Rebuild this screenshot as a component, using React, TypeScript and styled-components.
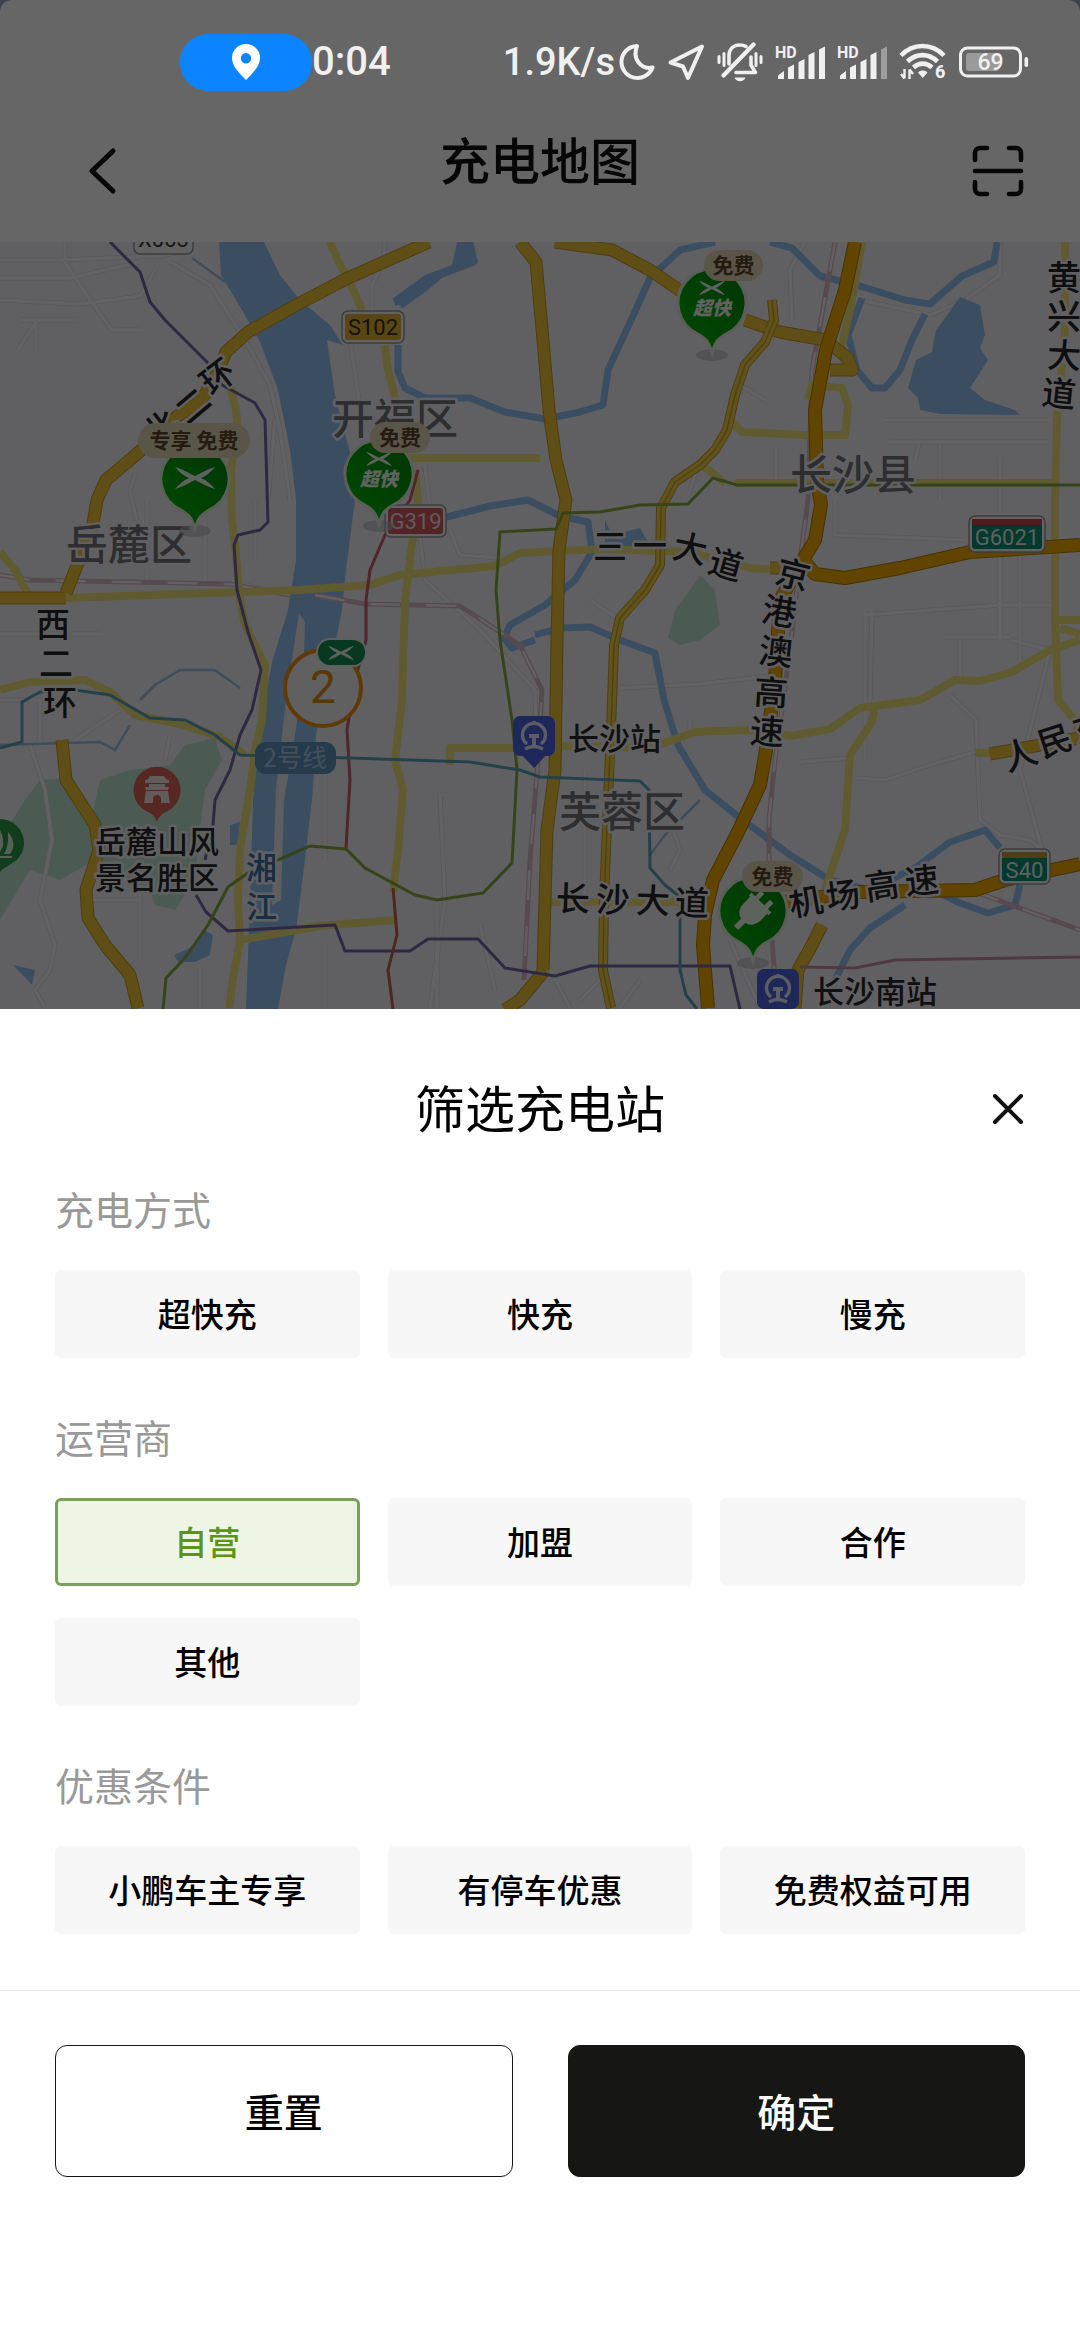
import React, { useState } from "react";
import styled, { createGlobalStyle } from "styled-components";

const cjk = `"Noto Sans CJK SC", "Noto Sans", sans-serif`;
const latin = `Roboto, "Noto Sans CJK SC", sans-serif`;

const GlobalStyle = createGlobalStyle`
  *, *::before, *::after { box-sizing: border-box; }
  body { margin: 0; background: #fff; font-family: ${cjk}; }
  button { font: inherit; margin: 0; cursor: pointer; }
`;

/* ---------- layout ---------- */

const Page = styled.div`
  min-height: 100vh;
  display: flex;
  flex-direction: column;
  background: #fff;
`;

const Scene = styled.div`
  position: relative;
  background: #8aa6c4;
`;

const Scrim = styled.div`
  position: absolute;
  inset: 0;
  background: rgba(0, 0, 0, 0.6);
`;

const Header = styled.header`
  background: #fff;
  border-radius: 12px 12px 0 0;
`;

const StatusBar = styled.div`
  position: relative;
  z-index: 1;
  display: flex;
  align-items: center;
  height: 100px;
  padding: 24px 51px 0 180px;
  color: #f0f0f0;
  font-family: ${latin};
  font-size: 38px;
  font-weight: 500;
  line-height: 48px;
`;

const LocationPill = styled.div`
  display: flex;
  align-items: center;
  justify-content: center;
  width: 132px;
  height: 57px;
  border-radius: 28px;
  background: #0d84ff;
`;

const Clock = styled.span`
  font-size: 40px;
`;

const NetSpeed = styled.span`
  margin-left: auto;
`;

const StatusIcons = styled.div`
  display: flex;
  align-items: center;
  gap: 12px;
  padding-left: 4px;

  svg { display: block; }
`;

const NavBar = styled.div`
  display: grid;
  grid-template-columns: 1fr auto 1fr;
  align-items: center;
  height: 142px;
  padding: 0 56px;
`;

const NavTitle = styled.h1`
  margin: 0;
  padding-bottom: 26px;
  font-size: 50px;
  line-height: 72px;
  font-weight: 500;
  color: #111;
`;

const IconButton = styled.button<{ $place: "start" | "end" }>`
  display: flex;
  align-items: center;
  justify-content: center;
  justify-self: ${(p) => p.$place};
  padding: 0 0 0 ${(p) => (p.$place === "start" ? "24px" : "0")};
  border: 0;
  background: none;
  color: #111;
`;

const MapCanvas = styled.svg`
  display: block;
  width: 100%;
  height: auto;
  background: #f1f1f5;
  font-family: ${cjk};
`;

const Sheet = styled.main`
  flex: 1;
  background: #fff;
`;

const SheetHeader = styled.div`
  display: grid;
  grid-template-columns: 1fr auto 1fr;
  align-items: center;
  padding: 61px 55px 38px;
`;

const SheetTitle = styled.h2`
  grid-column: 2;
  margin: 0;
  padding-bottom: 6px;
  font-size: 50px;
  line-height: 72px;
  font-weight: 400;
  color: #000;
`;

const Filters = styled.div`
  display: flex;
  flex-direction: column;
  gap: 56px;
  padding: 0 55px 56px;
`;

const Group = styled.section`
  display: flex;
  flex-direction: column;
  gap: 40px;
`;

const GroupTitle = styled.h3`
  margin: 0;
  font-size: 39px;
  line-height: 44px;
  font-weight: 400;
  color: #999;
`;

const ChipGrid = styled.div`
  display: grid;
  grid-template-columns: repeat(3, 1fr);
  gap: 32px 28px;
`;

const Chip = styled.button<{ $on: boolean }>`
  height: 88px;
  padding: 0 0 2px;
  border: 3px solid ${(p) => (p.$on ? "#7aa05a" : "#f7f7f7")};
  border-radius: 6px;
  background: ${(p) => (p.$on ? "#eef5e5" : "#f7f7f7")};
  color: ${(p) => (p.$on ? "#5c9418" : "#000")};
  font-size: 33px;
  line-height: 48px;
  font-weight: 500;
`;

const Actions = styled.div`
  display: grid;
  grid-template-columns: 1fr 1fr;
  gap: 55px;
  padding: 54px 55px 64px;
  border-top: 1px solid #ebebeb;
`;

const ActionButton = styled.button<{ $primary?: boolean }>`
  height: 132px;
  padding: 0 0 2px;
  border: 1px solid #161614;
  border-radius: 12px;
  background: ${(p) => (p.$primary ? "#161614" : "#fff")};
  color: ${(p) => (p.$primary ? "#fff" : "#000")};
  font-size: 39px;
  line-height: 56px;
  font-weight: 500;
`;

/* ---------- status icons ---------- */

const PinIcon = () => (
  <svg width="28" height="36" viewBox="0 0 28 36" aria-hidden="true">
    <path fillRule="evenodd" fill="#fff" d="M14 0a14 14 0 0 1 14 14c0 8-7 15-14 22C7 29 0 22 0 14A14 14 0 0 1 14 0Zm0 9a5.200 5.200 0 1 0 0 10.400A5.200 5.200 0 0 0 14 9Z" />
  </svg>
);

const MoonIcon = () => (
  <svg width="36" height="38" viewBox="0 0 36 38" aria-hidden="true">
    <path d="M18 3A16 16 0 1 0 33.500 24.500C22 27 13 16 18 3Z" fill="none" stroke="#f0f0f0" strokeWidth="4" strokeLinejoin="round" />
  </svg>
);

const ArrowIcon = () => (
  <svg width="38" height="38" viewBox="0 0 38 38" aria-hidden="true">
    <path d="M35 3.500 3.500 19.500 16 23.500 21 35Z" fill="none" stroke="#f0f0f0" strokeWidth="4" strokeLinejoin="round" />
  </svg>
);

const MutedBellIcon = () => (
  <svg width="46" height="40" viewBox="0 0 46 40" aria-hidden="true" fill="none" stroke="#f0f0f0" strokeWidth="3.600" strokeLinecap="round">
    <path d="M12 22V14C12 7 16.500 3 23 3c2.500 0 4.500.6 6 1.600" />
    <path d="M34 15v8l4.500 7.500H19" strokeLinejoin="round" />
    <path d="M6.500 33.500 36.500 2.500" strokeWidth="4.200" />
    <path d="M2 14.500v6M7 11.500v12M39 11.500v12M44 14.500v6" strokeWidth="3" />
    <path d="M17.500 35.500h11c-1 2.500-3 3.800-5.500 3.800s-4.500-1.300-5.500-3.800Z" fill="#f0f0f0" stroke="none" />
  </svg>
);

const SignalIcon = ({ weak }: { weak?: boolean }) => (
  <svg width="50" height="36" viewBox="0 -2 50 36" aria-hidden="true" fill="#f0f0f0" fontFamily="Roboto, sans-serif">
    <text x="0" y="12" fontSize="16" fontWeight="700">HD</text>
    <path d="M3 33v-3.500L9 25v8ZM13 33V21.500l6-3V33ZM23.500 33V16l6-3v20ZM33.500 33V9l6-3v27Z" />
    <path d="M44 33V3.500l6-3V33Z" opacity={weak ? 0.4 : 1} />
  </svg>
);

const WifiIcon = () => (
  <svg width="48" height="40" viewBox="0 0 48 40" aria-hidden="true" fill="none" stroke="#f0f0f0" strokeWidth="4.600" fontFamily="Roboto, sans-serif">
    <path d="M2 13.500C14 .8 33 .8 45 13.500" />
    <path d="M8.500 19.500c9-8.500 21-8.500 30 0" />
    <path d="M14.500 25.500c5.500-5.200 13-5.200 18.500 0" />
    <path d="M19 30.500c3-2.600 6.500-2.600 9.500 0L23.700 36Z" fill="#f0f0f0" stroke="none" />
    <path d="M5.500 27v9.500M2 32l3.500 4.500M10.500 37v-9.500M14 32l-3.500-4.500" strokeWidth="2.400" />
    <text x="36" y="36" fontSize="18" fontWeight="800" fill="#f0f0f0" stroke="none">6</text>
  </svg>
);

const BatteryIcon = () => (
  <svg width="70" height="32" viewBox="0 0 70 32" aria-hidden="true" fontFamily="Roboto, sans-serif">
    <rect x="1.500" y="2" width="60" height="28" rx="7" fill="none" stroke="#f0f0f0" strokeWidth="3" />
    <rect x="7" y="7" width="33" height="18" rx="3" fill="#9a9a9a" />
    <rect x="65.500" y="11" width="3.600" height="10" rx="1.800" fill="#f0f0f0" />
    <text x="31.500" y="24" fontSize="23" fontWeight="500" fill="#f0f0f0" textAnchor="middle">69</text>
  </svg>
);

/* ---------- map drawing ---------- */

const Wing = ({ x, y, s = 1, fill = "#fff" }: { x: number; y: number; s?: number; fill?: string }) => (
  <path
    transform={`translate(${x} ${y}) scale(${s})`}
    fill={fill}
    d="M-20-11C-12-9-5-4 0-2 5-4 12-9 20-11 16-6 11-2 6 0c5 2 10 6 14 11C12 9 5 4 0 2-5 4-12 9-20 11c4-5 9-9 14-11C-11-2-16-6-20-11Z"
  />
);

const StationPin = ({ x, y, children }: { x: number; y: number; children: React.ReactNode }) => (
  <g transform={`translate(${x} ${y})`}>
    <ellipse cx="0" cy="52" rx="16" ry="6" fill="#b4b4ba" opacity=".6" />
    <path d="M0 50C-3 40-5 36-14 31A34 34 0 1 1 14 31C5 36 3 40 0 50Z" fill="url(#pinGreen)" stroke="#dfeedd" strokeWidth="3" />
    {children}
  </g>
);

const FastPinArt = () => (
  <>
    <Wing x={0} y={-15} s={0.650} fill="#e8f4e8" />
    <text y="12" fontSize="19" fontWeight="900" fontStyle="italic" textAnchor="middle" fill="#eef6ee">超快</text>
  </>
);

const Badge = ({ x, y, w, h = 31, children }: { x: number; y: number; w: number; h?: number; children: string }) => (
  <g>
    <rect x={x} y={y} width={w} height={h} rx={h / 2} fill="#e2d4b6" />
    <text x={x + w / 2} y={y + h / 2 + 7} fontSize="21" fontWeight="700" textAnchor="middle" fill="#5a442c">{children}</text>
  </g>
);

type Glyph = [string, number, number, number];
const roadGlyphs: Glyph[] = [
  ["环", 218, 377, -38], ["二", 193, 406, -40], ["北", 161, 428, -38],
  ["三", 610, 547, 0], ["一", 650, 546, 0], ["大", 690, 549, 12], ["道", 726, 565, 16],
  ["京", 793, 575, 14], ["港", 779, 612, 10], ["澳", 776, 652, 6], ["高", 771, 693, 4], ["速", 767, 732, 4],
  ["黄", 1064, 278, 0], ["兴", 1064, 317, 0], ["大", 1064, 356, 3], ["道", 1059, 394, 6],
  ["西", 53, 625, 0], ["二", 56, 664, 0], ["环", 60, 703, 0],
  ["长", 573, 899, 2], ["沙", 613, 900, 2], ["大", 653, 901, 2], ["道", 692, 903, 2],
  ["机", 806, 902, -10], ["场", 843, 896, -8], ["高", 882, 886, -8], ["速", 922, 881, -6],
  ["人", 1020, 755, -18], ["民", 1055, 741, -18], ["东", 1090, 728, -18],
];

const Halo = styled.text`
  paint-order: stroke;
  stroke: #f1f1f5;
  stroke-width: 5px;
  stroke-linejoin: round;
`;

const RoadLabel = styled(Halo)`
  font-size: 34px;
  font-weight: 500;
  fill: #26262a;
  text-anchor: middle;
`;

const District = styled(Halo)`
  font-size: 42px;
  font-weight: 500;
  fill: #74747a;
  text-anchor: middle;
`;

const Place = styled(Halo)<{ $water?: boolean }>`
  font-size: 31px;
  font-weight: 500;
  fill: ${(p) => (p.$water ? "#3d6ea6" : "#28282c")};
`;

const Shield = ({ x, y, w, h, fill, cap, color, children }: { x: number; y: number; w: number; h: number; fill: string; cap?: string; color: string; children: string }) => (
  <g>
    <rect x={x} y={y} width={w} height={h} rx="6" fill="#f4f4f6" stroke="#96969c" strokeWidth="1.500" />
    <rect x={x + 3} y={y + 3} width={w - 6} height={h - 6} rx="3" fill={fill} />
    {cap && <rect x={x + 3} y={y + 3} width={w - 6} height="6" fill={cap} />}
    <text x={x + w / 2} y={y + h / 2 + (cap ? 11 : 8)} fontSize="22" fontFamily={latin} textAnchor="middle" fill={color}>{children}</text>
  </g>
);

const RailSign = ({ x, y }: { x: number; y: number }) => (
  <g transform={`translate(${x} ${y})`}>
    <path d="M-13 18 0 32 13 18Z" fill="#4a62e0" />
    <rect x="-21" y="-20" width="42" height="40" rx="7" fill="#4a62e0" />
    <g fill="none" stroke="#e6e8fa" strokeWidth="3.400">
      <path d="M-7 8A11.500 11.500 0 1 1 7 8" />
      <path d="M-5 0H5M0 0v10" strokeWidth="4" />
      <path d="M-9 13Q0 8 9 13" />
      <path d="M0-15v4" />
    </g>
  </g>
);

const streets = [
  "M0 260H60L160 256 190 250", "M0 278H70L140 262", "M0 300 80 304 140 296 155 270", "M65 242V262L90 300 112 330H140",
  "M20 320H75M37 320 18 350M36 320V350", "M170 262 210 285 245 340 270 385 280 430 290 500", "M385 242 383 262 372 285V310",
  "M350 340 362 420M275 420 268 500M255 500V560", "M245 585 290 595", "M147 500V580M205 520V580", "M135 475 130 490 145 560",
  "M425 465 430 510 418 520 425 580 480 630 535 690 538 780", "M450 530 460 555 500 558", "M805 242 790 270 792 320",
  "M860 300 930 315 965 300 1000 275 1000 242", "M885 420H1050M890 442H1050M940 445V500M1000 460V640M915 460 920 440",
  "M835 500V535L965 540M1000 520V640M1020 530V660", "M865 615 1000 605H1050", "M865 615V760", "M872 610 870 700", "M945 637H1010M960 640V680",
  "M620 688 700 684 780 675", "M690 720V730M800 762 850 758", "M855 778 885 780 930 765 975 752", "M950 695 976 720 980 820 1000 835 1030 840 1042 850",
  "M1010 640 1050 650 1020 770 1042 850", "M585 770V920M670 820 680 850 670 870", "M448 795H440L445 900 430 1008", "M437 905V1008M480 925 495 990M325 945V1008M325 770V860",
  "M30 745 45 790 52 840 40 900 55 945 50 970 35 990 45 1008", "M90 900H140M140 890V960M200 970V1008", "M0 634H100M0 700H40V740M170 735 165 760M75 740 120 710",
  "M545 960 570 1008M640 980 620 1008M600 980 580 1000", "M730 940 760 1008", "M700 460 690 490M590 600 620 620 640 590", "M740 385 765 400M776 450V480",
];
const rivers = [
  "M470 242 474 262 440 275 425 288 400 306M398 345V372L405 388 425 398 470 398 505 412 545 419 580 412 603 405 608 370 632 318 650 278 680 250 715 242",
  "M770 242 792 248 820 276 860 286 905 300 930 304 962 276 994 262 997 242", "M862 298 848 335 857 370 872 388 885 388 900 370 912 340 925 314",
  "M443 518 490 506 528 500 560 516 588 522 592 552 575 580 545 605 510 625 504 638 512 648 535 640",
  "M535 635 560 628 590 627 620 640 655 653 664 700 678 745 705 790 740 818 790 855 830 880 868 890 915 868 950 842 985 830 1000 848",
  "M1020 885 1015 905 988 913 960 903 930 888M905 905 870 928 850 950 835 980",
];
const minorRoads = [
  "M65 598 300 590 370 585 400 575 495 566 520 553 600 549 690 552 750 568 780 570", "M0 552 15 570 30 598",
  "M330 242 340 265 348 278 362 310M385 345 388 370 398 410 M415 470 418 500 410 560 405 600 402 700 395 760 403 790 398 850 393 892",
  "M230 385 236 410 238 430 231 470 232 520 235 545 240 600 245 625 265 665 262 720 255 750 250 790 240 850 238 900 240 940 232 985 229 1008",
  "M0 690 30 682 85 680 110 692 135 715 180 724 220 737 245 755", "M400 458H540", "M240 940 320 926 395 920", "M450 765V748H515",
  "M560 746 650 748 695 732 750 730 790 736 830 729 860 708 920 700 955 680 980 681 1012 672 1050 650 1080 640",
  "M875 705 872 722 850 755 845 830 825 890", "M1065 242V330L1057 420 1055 500V620L1058 700 1075 720 1080 740", "M735 483H1055M698 462 725 483",
  "M728 418 742 432 805 435 845 435 848 405 842 388 812 385 808 400", "M1055 620H1080M1060 628 1080 634", "M550 902H690M975 753H1000", "M862 242 850 310 840 355 855 375",
];
const mainRoads = [
  "M429 242 348 278 300 303 248 332 226 352 214 380 200 402 176 417 138 453 106 480 97 500 92 530 78 563 66 593",
  "M0 598H66M62 740 66 780 95 825 99 850 86 890 88 918 105 945 130 975 138 1008", "M520 242 536 262 543 340 549 410 556 460 566 500 559 550 557 640 555 770 547 830 545 900 543 970",
  "M545 970 520 1000 505 1010", "M555 242 612 250 650 270 682 292M745 320 780 332 825 340 848 358 852 370H830", "M822 925 812 945 798 970 795 1008", "M990 754 1080 738M800 568H770",
];
const express = [
  "M855 242 845 290 826 350 815 410 817 480 821 505 815 540 803 560 780 600 775 680 766 750 760 785 738 832 713 880 705 915 703 945 708 1008",
  "M803 560 815 574 845 578 900 568 970 552 1080 545", "M760 905 860 892 975 890 1005 880 1080 864",
];
const ringRoad = "M772 300 774 320 765 342 745 365 735 395 727 430 715 450 700 465 675 482 661 508 660 565 645 590 620 618 614 645 611 730 608 800 604 900 603 970 611 1008";
const rails = [
  "M0 575 30 580 230 584 290 595M315 595 365 604 460 606 520 645 542 690 538 760 530 860 524 980", "M835 242 812 370 808 500 800 560 790 650 775 760 769 820 769 900 775 980", "M970 890 1080 930",
];

const CityMap = () => (
  <MapCanvas viewBox="0 242 1080 767" role="img" aria-label="充电地图">
    <defs>
      <linearGradient id="pinGreen" x1="0" y1="1" x2="1" y2="0">
        <stop offset="0" stopColor="#00b800" />
        <stop offset=".5" stopColor="#00a008" />
        <stop offset="1" stopColor="#008412" />
      </linearGradient>
    </defs>
    <g fill="none" strokeLinejoin="round">
      <g fill="#bfe0d2">
        <path d="M0 840 25 800 40 780 62 778 85 800 92 815 100 780 130 770 170 765 185 745 215 738 222 760 205 790 200 830 195 880 175 910 155 905 150 890 95 860 60 880 30 870 0 920Z" />
        <path d="M690 590 700 575 715 590 720 625 700 640 680 645 668 638 675 610Z" />
      </g>
      {streets.map((d) => <path key={d} d={d} stroke="#d9d9df" strokeWidth="5" />)}
      {streets.map((d) => <path key={d} d={d} stroke="#f6f6f9" strokeWidth="3.400" />)}
      <g fill="#94c4f2">
        <path d="M219 242 221 275 242 310 260 342 278 390 290 450 296 500 296 560 288 610 272 662 258 740 253 800 250 900 246 1009H278L286 965 296 930 305 860 313 790 316 735 328 680 342 610 346 570 355 500 352 460 335 395 327 340 343 345 330 325 300 300 280 275 264 242Z" />
        <path d="M945 318 960 297 980 305 985 335 980 348 988 360 970 388 985 400 1015 410 1020 415 940 414 920 410 918 398 908 388 916 360 932 352 936 330Z" />
        <path d="M457 242H472L478 262 455 270 428 282 410 300 395 306 393 298 425 275 452 265Z" />
        <path d="M174 955 190 948 205 930 213 935 210 955 195 962 178 962ZM230 825 240 822 238 845 230 845ZM605 520 612 535 640 528 650 545 640 550 605 545ZM13 965 35 970 32 985Z" />
      </g>
      <path d="M299 613 305 622 303 680 293 748 284 800 281 900 272 905 276 790 286 700Z" fill="#ececf2" />
      {rivers.map((d) => <path key={d} d={d} stroke="#94c4f2" strokeWidth="7" />)}
      <path d="M140 700 155 685 180 670 215 670 240 688M0 745 100 742 115 750 130 725M192 258 225 282M650 855 665 835 700 800" stroke="#9dbfe0" strokeWidth="2.500" />
      {rails.map((d) => <path key={d} d={d} stroke="#d8b8c4" strokeWidth="5" />)}
      {rails.map((d) => <path key={d} d={d} stroke="#f4f0f4" strokeWidth="2.400" strokeDasharray="30 26" />)}
      {minorRoads.map((d) => <path key={d} d={d} stroke="#f0e07c" strokeWidth="8" />)}
      {mainRoads.map((d) => <path key={d} d={d} stroke="#c49a24" strokeWidth="13" />)}
      {mainRoads.map((d) => <path key={d} d={d} stroke="#f0c43a" strokeWidth="11" />)}
      <path d={ringRoad} stroke="#c49e30" strokeWidth="10" />
      <path d={ringRoad} stroke="#f2d042" strokeWidth="8" />
      <path d={ringRoad} stroke="#c8a434" strokeWidth="1.500" />
      {express.map((d) => <path key={d} d={d} stroke="#b48000" strokeWidth="14" />)}
      {express.map((d) => <path key={d} d={d} stroke="#f0aa00" strokeWidth="12" />)}
      <g strokeWidth="3">
        <path stroke="#7565a8" d="M110 242 140 272 150 302 165 320 212 367 222 385 255 403 265 420 268 522 260 530 238 535 234 545 237 590 248 632 261 670 252 710 240 735 230 770 215 800 213 825 205 860M196 895 206 912 228 931 335 925 345 951 410 951 428 939 478 939 505 968 555 976 590 966 730 966 740 1009" />
        <path stroke="#cc5a6c" d="M418 470 410 500 385 535 370 570 366 600V640L355 680 347 730 350 780 346 848" />
        <path stroke="#c0624a" d="M393 888 397 935 388 970 393 1009" />
        <path stroke="#88a83c" d="M163 1009 166 978 185 958 208 925 228 887 248 873 278 860 310 846 346 849 365 868 415 895 437 900 483 893 512 863 517 770 512 720 500 640 496 590 500 532 556 529 563 513 600 512 640 505 688 504 713 478 737 485H1080" />
        <path stroke="#5aa0b4" d="M0 748 22 742V702L40 692 75 690 110 695 150 718 185 720 215 735 240 755 350 758 470 762 520 770 540 777 640 781 649 790 650 868 665 885 680 897V970L686 995 697 1009" />
        <path stroke="#c88ca0" d="M800 967 855 968 895 960 1080 957" />
      </g>
    </g>

    <rect x="255" y="742" width="81" height="32" rx="11" fill="#5c93bd" />
    <text x="295" y="767" fontSize="25" textAnchor="middle" fill="#a4c8e4">2号线</text>

    <District x="129" y="560">岳麓区</District>
    <District x="395" y="434">开福区</District>
    <District x="853" y="490">长沙县</District>
    <District x="622" y="827">芙蓉区</District>
    {roadGlyphs.map(([c, x, y, r]) => (
      <RoadLabel key={`${x}-${y}`} y="12" transform={`translate(${x} ${y}) rotate(${r})`}>{c}</RoadLabel>
    ))}
    <Place x="568" y="750">长沙站</Place>
    <Place x="813" y="1003">长沙南站</Place>
    <Place x="95" y="853">岳麓山风</Place>
    <Place x="95" y="889">景名胜区</Place>
    <Place x="246" y="879" $water>湘</Place>
    <Place x="246" y="918" $water>江</Place>

    <Shield x={134} y={223} w={59} h={31} fill="#f4f4f6" color="#3c3c40">X003</Shield>
    <Shield x={342} y={311} w={62} h={32} fill="#e0b032" color="#3a2c10">S102</Shield>
    <Shield x={385} y={505} w={61} h={32} fill="#d05860" color="#f0e0e0">G319</Shield>
    <Shield x={969} y={516} w={76} h={36} fill="#008f70" cap="#c8444c" color="#e8f0ee">G6021</Shield>
    <Shield x={999} y={849} w={51} h={35} fill="#008f70" cap="#c09a40" color="#e8f0ee">S40</Shield>

    <RailSign x={534} y={736} />
    <RailSign x={778} y={989} />

    <path d="M157 822C154 814 150 813 146 811A23.500 23.500 0 1 1 168 811C164 813 160 814 157 822Z" fill="#d86454" />
    <path fill="#f0e6e4" fillRule="evenodd" d="M145 780c3 0 4-2 5-4h14c1 2 2 4 5 4v3h-24ZM149 784h16v3h4l-1 3h-22l-1-3h4ZM146 791h22l2 12h-9v-4a4 4 0 0 0-8 0v4h-9Z" />
    <path d="M0 872C4 866 24 862 24 843A24 24 0 0 0 0 819Z" fill="#2f9a48" />
    <path d="M0 830q4 8 3 16l-3 6ZM8 832q7 8 5 16-1 4-3 6H4q5-8 4-22ZM0 856h12v2H0Z" fill="#d8eedc" />

    <StationPin x={195} y={479}><Wing x={0} y={-1} fill="#e8f4e8" /></StationPin>
    <Badge x={138} y={423} w={112} h={35}>专享 免费</Badge>
    <StationPin x={379} y={474}><FastPinArt /></StationPin>
    <Badge x={370} y={422} w={60}>免费</Badge>
    <StationPin x={712} y={303}><FastPinArt /></StationPin>
    <Badge x={704} y={250} w={59}>免费</Badge>
    <StationPin x={753} y={911}>
      <g transform="rotate(45)" fill="#e8f4e8">
        <path d="M-9-12V-20H-4V-12H4V-20H9V-12H14V-8H12V2A12 12 0 0 1 3 14V24H-3V14A12 12 0 0 1-12 2V-8H-14V-12Z" />
      </g>
    </StationPin>
    <Badge x={742} y={861} w={61}>免费</Badge>

    <circle cx="323" cy="688" r="38" fill="#f1f1f3" stroke="#f09010" strokeWidth="4" />
    <text x="323" y="703" fontSize="46" fontFamily={latin} textAnchor="middle" fill="#e08a10">2</text>
    <rect x="317" y="639" width="49" height="27" rx="13" fill="#148c50" stroke="#e6f2ea" strokeWidth="2" />
    <Wing x={341} y={653} s={0.650} fill="#e8f4e8" />
  </MapCanvas>
);

/* ---------- screen ---------- */

const groups = [
  { title: "充电方式", options: ["超快充", "快充", "慢充"] },
  { title: "运营商", options: ["自营", "加盟", "合作", "其他"] },
  { title: "优惠条件", options: ["小鹏车主专享", "有停车优惠", "免费权益可用"] },
];

export default function App() {
  const [selected, setSelected] = useState<string[]>(["自营"]);
  const toggle = (o: string) =>
    setSelected((s) => (s.includes(o) ? s.filter((v) => v !== o) : [...s, o]));

  return (
    <Page>
      <GlobalStyle />
      <Scene>
        <Header>
          <StatusBar>
            <LocationPill><PinIcon /></LocationPill>
            <Clock>0:04</Clock>
            <NetSpeed>1.9K/s</NetSpeed>
            <StatusIcons>
              <MoonIcon />
              <ArrowIcon />
              <MutedBellIcon />
              <SignalIcon />
              <SignalIcon weak />
              <WifiIcon />
              <BatteryIcon />
            </StatusIcons>
          </StatusBar>
          <NavBar>
            <IconButton type="button" $place="start" aria-label="返回">
              <svg width="44" height="48" viewBox="0 0 44 48" aria-hidden="true">
                <path d="M33 4 12 24 33 44" fill="none" stroke="currentColor" strokeWidth="5" strokeLinecap="round" strokeLinejoin="round" />
              </svg>
            </IconButton>
            <NavTitle>充电地图</NavTitle>
            <IconButton type="button" $place="end" aria-label="扫一扫">
              <svg width="52" height="52" viewBox="0 0 52 52" aria-hidden="true" fill="none" stroke="currentColor" strokeWidth="4.600" strokeLinecap="round">
                <path d="M3 15V8a5 5 0 0 1 5-5h7M37 3h7a5 5 0 0 1 5 5v7M49 37v7a5 5 0 0 1-5 5h-7M15 49H8a5 5 0 0 1-5-5v-7M3 26h46" />
              </svg>
            </IconButton>
          </NavBar>
        </Header>
        <CityMap />
        <Scrim />
      </Scene>
      <Sheet>
        <SheetHeader>
          <SheetTitle>筛选充电站</SheetTitle>
          <IconButton type="button" $place="end" aria-label="关闭">
            <svg width="34" height="34" viewBox="0 0 34 34" aria-hidden="true">
              <path d="M4 4 30 30M30 4 4 30" fill="none" stroke="currentColor" strokeWidth="4" strokeLinecap="round" />
            </svg>
          </IconButton>
        </SheetHeader>
        <Filters>
          {groups.map((g) => (
            <Group key={g.title}>
              <GroupTitle>{g.title}</GroupTitle>
              <ChipGrid>
                {g.options.map((o) => (
                  <Chip key={o} type="button" $on={selected.includes(o)} aria-pressed={selected.includes(o)} onClick={() => toggle(o)}>
                    {o}
                  </Chip>
                ))}
              </ChipGrid>
            </Group>
          ))}
        </Filters>
        <Actions>
          <ActionButton type="button" onClick={() => setSelected([])}>重置</ActionButton>
          <ActionButton type="button" $primary>确定</ActionButton>
        </Actions>
      </Sheet>
    </Page>
  );
}
